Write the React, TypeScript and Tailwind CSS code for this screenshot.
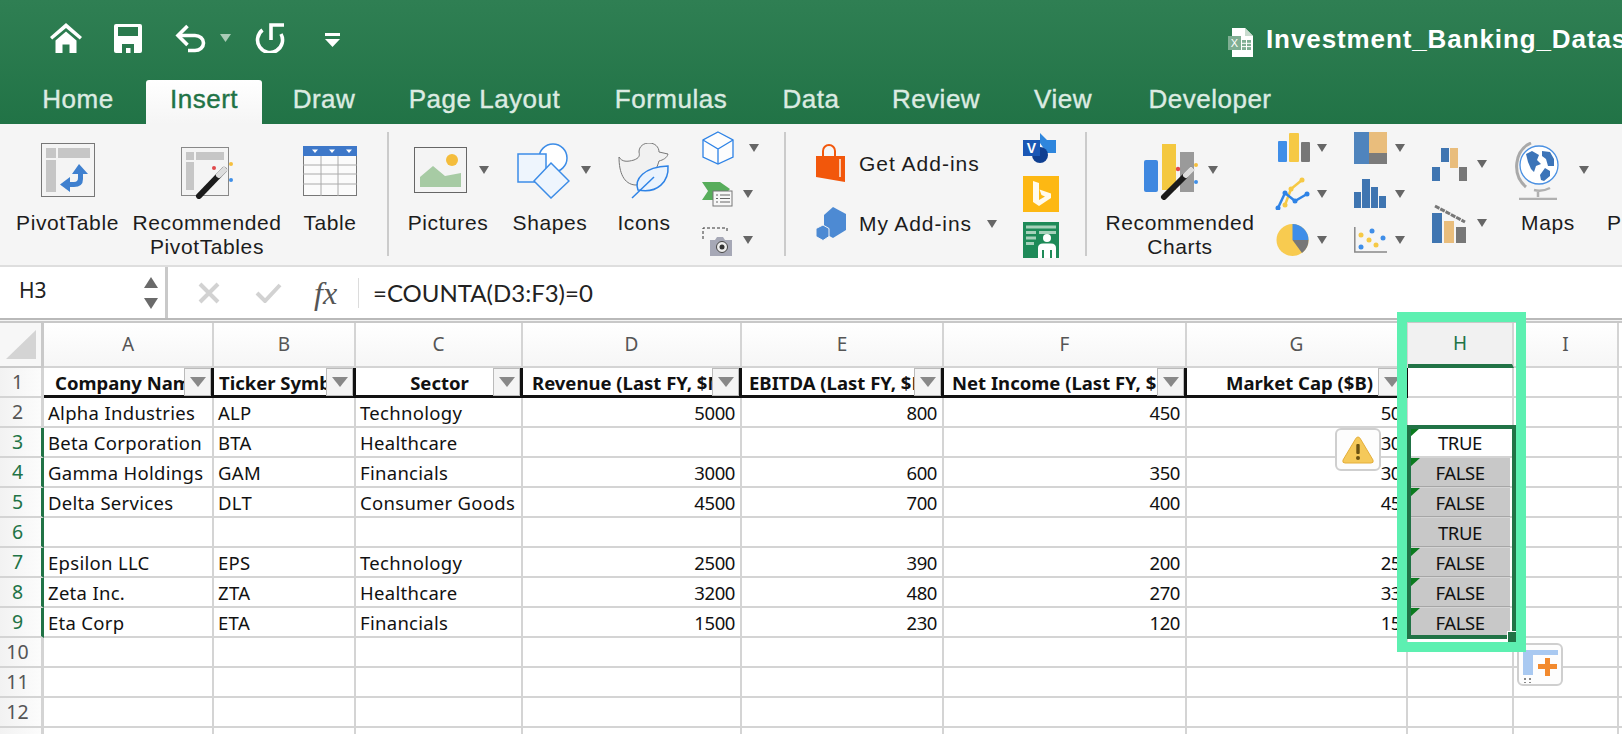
import React from "react";

const Caret = ({ className = "" }: { className?: string }) => (
  <svg width="10" height="8" viewBox="0 0 10 8" className={"flex-none " + className}><path d="M0 0H10L5 8Z" fill="#666" /></svg>
);

const Home = () => (
  <svg width="32" height="30" viewBox="0 0 32 30" fill="#fff" className="flex-none">
    <path d="M16 0 0 14l2.2 2.6L16 5l13.8 11.6L32 14Z" />
    <path d="M5.500 17.500 16 8.500l10.500 9V30H19.500v-8.500h-7V30H5.500Z" />
  </svg>
);
const Save = () => (
  <svg width="28" height="29" viewBox="0 0 28 29" className="flex-none">
    <path d="M2 0H26a2 2 0 0 1 2 2V27a2 2 0 0 1-2 2H2a2 2 0 0 1-2-2V2a2 2 0 0 1 2-2Z" fill="#fff" />
    <rect x="4" y="3" width="20" height="9" fill="#2a7a4e" />
    <path d="M8 29V20H20V29H16.500V24H12V29Z" fill="#2a7a4e" />
  </svg>
);
const Undo = () => (
  <svg width="31" height="29" viewBox="0 0 31 29" fill="none" stroke="#fff" strokeWidth="3.600" className="flex-none">
    <path d="M12.500 2 3 11.500 12.500 21" />
    <path d="M3 11.500H20a8.500 7.500 0 0 1 0 15H13" />
  </svg>
);
const Redo = () => (
  <svg width="30" height="30" viewBox="0 0 30 30" fill="none" stroke="#fff" strokeWidth="3.600" className="flex-none">
    <path d="M7.500 7A12.500 12.500 0 1 0 26 11" />
    <path d="M29 2H16V17" />
  </svg>
);
const Customize = () => (
  <svg width="15" height="14" viewBox="0 0 15 14" fill="#fff" className="flex-none mt-[4px]">
    <rect width="15" height="3" /><path d="M0 6H15L7.500 14Z" />
  </svg>
);
const XlDoc = () => (
  <svg width="25" height="29" viewBox="0 0 25 29" className="flex-none">
    <path d="M4 0H17L25 8V29H4Z" fill="#fff" />
    <path d="M17 0 25 8H17Z" fill="#c9dccf" />
    <rect x="14" y="12" width="9" height="10" fill="#7fae93" />
    <path d="M14 15.300H23M14 18.600H23M18.500 12V22" stroke="#fff" strokeWidth="1" />
    <rect x="0" y="8" width="13" height="14" fill="#7fae93" />
    <text x="6.500" y="19" fontSize="11" fill="#fff" textAnchor="middle" fontFamily="Liberation Sans">X</text>
  </svg>
);

const Pivot = () => (
  <svg width="54" height="54" viewBox="0 0 54 54" className="flex-none">
    <rect x=".5" y=".5" width="53" height="53" fill="#f4f4f4" stroke="#777" />
    <rect x="5" y="5" width="10" height="10" fill="#c6c6c6" /><rect x="17" y="5" width="32" height="10" fill="#c6c6c6" />
    <rect x="5" y="17" width="10" height="32" fill="#c6c6c6" />
    <path d="M38 21 47 31H42V36Q42 44 33 44H29V49L19 41.500 29 34V39H33Q37 39 37 35V31H31Z" fill="#3f80cf" />
  </svg>
);
const RecPivot = () => (
  <svg width="56" height="52" viewBox="0 0 56 52" className="flex-none">
    <rect x=".5" y=".5" width="47" height="48" fill="#f4f4f4" stroke="#888" />
    <rect x="5" y="5" width="8" height="8" fill="#c6c6c6" /><rect x="15" y="5" width="28" height="8" fill="#c6c6c6" />
    <rect x="5" y="15" width="8" height="28" fill="#c6c6c6" />
    <path d="M18 49 43 23" stroke="#1b1b1b" strokeWidth="6" strokeLinecap="round" />
    <path d="M38 28 43 23" stroke="#ddd" strokeWidth="6" strokeLinecap="round" />
    <circle cx="33" cy="21" r="2" fill="#e0494b" /><circle cx="50" cy="17" r="2" fill="#f5bf3e" /><circle cx="50" cy="33" r="2" fill="#3f8fe8" />
  </svg>
);
const TableIcon = () => (
  <svg width="54" height="50" viewBox="0 0 54 50" className="flex-none">
    <rect x=".5" y=".5" width="53" height="49" fill="#fbfbfb" stroke="#777" />
    <rect width="54" height="10" fill="#3e78c9" />
    <path d="M9 3.500H15L12 7ZM26 3.500H32L29 7ZM43 3.500H49L46 7Z" fill="#fff" />
    <path d="M0 19H54M0 28H54M0 38H54M18 10V50M35 10V50" stroke="#aaa" fill="none" />
  </svg>
);
const Picture = () => (
  <svg width="53" height="46" viewBox="0 0 53 46" className="flex-none">
    <rect x=".5" y=".5" width="52" height="45" fill="#f4f4f4" stroke="#666" />
    <circle cx="38" cy="13" r="6" fill="#f4bd3c" />
    <path d="M6 40V30L19 19 31 29 47 26V40Z" fill="#a7cba4" />
  </svg>
);
const Shapes = () => (
  <svg width="53" height="56" viewBox="0 0 53 56" className="flex-none">
    <circle cx="36" cy="15" r="14" fill="#fff" stroke="#3c8ce7" strokeWidth="1.500" />
    <rect x="1" y="11" width="28" height="28" fill="#eef5fd" stroke="#3c8ce7" strokeWidth="1.500" />
    <path d="M34 20 52 38 34 55 17 38Z" fill="#eef5fd" stroke="#3c8ce7" strokeWidth="1.500" />
  </svg>
);
const Duck = () => (
  <svg width="53" height="56" viewBox="0 0 53 56" className="flex-none">
    <path d="M1 14C4 19 9 19 16 17 21 15 22 13 21 9 21 3 26 0 31 0 37 0 41 4 41 9L50 11C49 15 45 17 41 18 38 28 32 42 17 42 6 41 1 30 1 14Z" fill="#f1f1f1" stroke="#777" strokeWidth="1" />
    <path d="M50 23C51 38 40 51 20 47 16 36 26 24 50 23Z" fill="#eaf3fd" stroke="#2e83e6" strokeWidth="1.500" />
    <path d="M14 55 36 34" stroke="#2e83e6" strokeWidth="1.500" fill="none" />
  </svg>
);
const Cube = () => (
  <svg width="32" height="34" viewBox="0 0 32 34" fill="#fdfdfd" stroke="#2e83e6" strokeWidth="1.300" className="flex-none">
    <path d="M16 1 31 9V26L16 33 1 26V9Z" /><path d="M1 9 16 18 31 9M16 18V33" fill="none" />
  </svg>
);
const Smart = () => (
  <svg width="31" height="25" viewBox="0 0 31 25" className="flex-none">
    <path d="M0 0H18L28 7 18 18H0L6 9Z" fill="#57ad5b" />
    <rect x="11" y="9" width="19" height="15" fill="#f7f7f7" stroke="#777" />
    <path d="M14 13h2M18 13h10M14 16.500h2M18 16.500h10M14 20h2M18 20h10" stroke="#666" />
  </svg>
);
const Shot = () => (
  <svg width="31" height="30" viewBox="0 0 31 30" className="flex-none">
    <path d="M1 12V1H25V6" stroke="#333" strokeDasharray="3 2" fill="none" />
    <path d="M8 13H13L15 10H21L23 13H30V29H8Z" fill="#a6a8b6" />
    <circle cx="20" cy="20" r="5.500" fill="#eee" stroke="#444" /><circle cx="20" cy="20" r="2.500" fill="#333" />
  </svg>
);
const Bag = () => (
  <svg width="30" height="38" viewBox="0 0 30 38" className="flex-none">
    <path d="M8 12V7a6 6 0 0 1 12 0V12" fill="none" stroke="#f2570b" strokeWidth="2" />
    <path d="M1 12H30V38L1 33Z" fill="#f2570b" />
    <path d="M25 15V33" stroke="#f7c7ad" strokeWidth="2" />
  </svg>
);
const Hexes = () => (
  <svg width="31" height="34" viewBox="0 0 31 34" className="flex-none">
    <path d="M18 0 31 7V23L18 31 9 26V8Z" fill="#4d8ad3" />
    <path d="M8 18 14 21.500V29.500L8 33.500 1 29.500V21.500Z" fill="#4d8ad3" stroke="#f5f5f5" />
  </svg>
);
const Visio = () => (
  <svg width="33" height="30" viewBox="0 0 33 30" className="flex-none">
    <path d="M17 0 24 7H33V20H24L17 10Z" fill="#2e86dd" />
    <circle cx="17" cy="22" r="8" fill="#0f3f91" />
    <rect x="0" y="7" width="17" height="16" fill="#1a57b5" />
    <text x="8.500" y="20" fontSize="14" fontWeight="700" fill="#fff" textAnchor="middle" fontFamily="Liberation Sans">V</text>
  </svg>
);
const Bing = () => (
  <svg width="36" height="36" viewBox="0 0 36 36" className="flex-none">
    <rect width="36" height="36" fill="#fdb813" />
    <path d="M10 5 16 7V24L22 20.500 18.500 19 16.500 13.500 28 17.500V22L16 30 10 26Z" fill="#fff" fillOpacity=".92" />
  </svg>
);
const PeopleApp = () => (
  <svg width="36" height="36" viewBox="0 0 36 36" className="flex-none">
    <rect width="36" height="36" fill="#1e8a58" />
    <path d="M3 3.500H33V6.500H3ZM3 9H13V12H3ZM16 9H33V12H16ZM3 14.500H13V17.500H3ZM3 20H11V23H3Z" fill="#a6d1ba" />
    <circle cx="24" cy="16" r="4" fill="#fff" />
    <path d="M15 36V26Q15 21.500 20 21.500H28Q33 21.500 33 26V36H29V28H27V36H21V28H19V36Z" fill="#fff" />
  </svg>
);
const RecCharts = () => (
  <svg width="55" height="56" viewBox="0 0 55 56" className="flex-none">
    <rect x="0" y="16" width="14" height="32" rx="2" fill="#3f88e0" />
    <rect x="18" y="0" width="14" height="46" fill="#f4c83f" />
    <rect x="36" y="8" width="14" height="40" fill="#9a9a9a" />
    <path d="M20 53 47 26" stroke="#1b1b1b" strokeWidth="6" strokeLinecap="round" />
    <path d="M42 31 47 26" stroke="#ddd" strokeWidth="6" strokeLinecap="round" />
    <circle cx="34" cy="25" r="2.200" fill="#e0494b" /><circle cx="52" cy="21" r="2" fill="#f5bf3e" /><circle cx="52" cy="38" r="2" fill="#3f8fe8" />
  </svg>
);
const ColChart = () => (
  <svg width="32" height="29" viewBox="0 0 32 29" className="flex-none">
    <rect y="8" width="9" height="21" rx="1" fill="#3f8ee8" /><rect x="11" width="10" height="29" rx="1" fill="#f6c945" /><rect x="23" y="9" width="9" height="20" rx="1" fill="#777" />
  </svg>
);
const LineChart = () => (
  <svg width="36" height="33" viewBox="0 0 36 33" fill="none" className="flex-none">
    <path d="M10 28 16 12 27 3" stroke="#f6c945" strokeWidth="2.500" />
    <path d="M3 31 10 16 20 24 32 17" stroke="#2e83e6" strokeWidth="2.500" />
    <circle cx="27" cy="3" r="2.500" fill="#f6c945" /><circle cx="16" cy="12" r="2.500" fill="#f6c945" /><circle cx="10" cy="28" r="2.500" fill="#f6c945" />
    <circle cx="3" cy="31" r="2.500" fill="#2e83e6" /><circle cx="10" cy="16" r="2.500" fill="#2e83e6" /><circle cx="20" cy="24" r="2.500" fill="#2e83e6" /><circle cx="32" cy="17" r="2.500" fill="#2e83e6" />
  </svg>
);
const Pie = () => (
  <svg width="33" height="32" viewBox="0 0 33 32" className="flex-none">
    <circle cx="16.500" cy="16" r="16" fill="#f8cb50" />
    <path d="M16.500 16V0A16 16 0 0 1 32.500 16Z" fill="#3f8ee8" />
    <path d="M16.500 16H32.500A16 16 0 0 1 26 29Z" fill="#777" />
  </svg>
);
const Treemap = () => (
  <svg width="33" height="32" viewBox="0 0 33 32" className="flex-none">
    <rect width="15" height="32" fill="#4f84bd" /><rect x="15" width="18" height="21" fill="#e9bd7c" /><rect x="15" y="21" width="18" height="11" fill="#7b7b7b" />
  </svg>
);
const Hist = () => (
  <svg width="32" height="29" viewBox="0 0 32 29" fill="#3f75b1" className="flex-none">
    <rect y="13" width="7" height="16" /><rect x="8" width="8" height="29" /><rect x="17" y="8" width="7" height="21" /><rect x="25" y="17" width="7" height="12" />
  </svg>
);
const Scatter = () => (
  <svg width="33" height="26" viewBox="0 0 33 26" className="flex-none">
    <path d="M.8 0V25H33" stroke="#888" strokeWidth="1.500" fill="none" />
    <circle cx="7" cy="8" r="2.500" fill="#f6c945" /><circle cx="18" cy="4" r="2.500" fill="#3f8ee8" /><circle cx="15" cy="13" r="2.500" fill="#f6c945" />
    <circle cx="7" cy="20" r="2.500" fill="#3f8ee8" /><circle cx="22" cy="18" r="2.500" fill="#f6c945" /><circle cx="29" cy="11" r="2.500" fill="#3f8ee8" />
  </svg>
);
const Waterfall = () => (
  <svg width="35" height="33" viewBox="0 0 35 33" className="flex-none">
    <rect y="19" width="8" height="14" fill="#3f75b1" /><rect x="9" width="8" height="14" fill="#3f75b1" /><rect x="18" width="8" height="20" fill="#e9bd7c" /><rect x="27" y="19" width="8" height="14" fill="#777" />
  </svg>
);
const Combo = () => (
  <svg width="35" height="39" viewBox="0 0 35 39" className="flex-none">
    <rect y="9" width="10" height="30" fill="#3f75b1" /><rect x="12" y="17" width="10" height="22" fill="#e9bd7c" /><rect x="24" y="23" width="10" height="16" fill="#777" />
    <path d="M3 2 33 18" stroke="#777" strokeWidth="3" strokeDasharray="5 1" fill="none" />
  </svg>
);
const Globe = () => (
  <svg width="48" height="58" viewBox="0 0 48 58" className="flex-none">
    <path d="M17 1C1 8-3 32 12 45" fill="none" stroke="#a9a9a9" strokeWidth="3" />
    <path d="M36 46Q28 50 20 48M24 48V55M5 57H43" fill="none" stroke="#b0b0b0" strokeWidth="2.500" />
    <circle cx="25" cy="23" r="19" fill="#fff" stroke="#4a90e2" strokeWidth="1.300" />
    <path d="M12 12 18 9 25 13 23 18 27 22 22 24 20 30 17 27 14 20ZM26 33 31 26 36 29 36 34 30 39 27 38ZM28 9 36 10 40 17 40 24 34 24 32 17 28 14Z" fill="#3c74b8" />
  </svg>
);

const Big = ({ label, w, children, slot = "justify-center" }: { label: React.ReactNode; w: string; children: React.ReactNode; slot?: string }) => (
  <div className={"flex flex-none flex-col items-center pt-[19px] " + w}>
    <div className={"flex h-[68px] w-full items-start " + slot}>{children}</div>
    <div className="whitespace-nowrap text-center text-[21px] leading-[24px] tracking-[0.6px] text-[#1c1c1c]">{label}</div>
  </div>
);
const Sep = () => <div className="mt-[8px] h-[124px] w-[2px] flex-none bg-[#cbcbcb]" />;

const tabs: [string, string][] = [
  ["Home", "ml-[20px] w-[116px]"], ["Insert", "ml-[10px] w-[116px]"], ["Draw", "w-[124px]"], ["Page Layout", "w-[197px]"],
  ["Formulas", "w-[176px]"], ["Data", "w-[104px]"], ["Review", "w-[146px]"], ["View", "w-[108px]"], ["Developer", "w-[186px]"],
];

const rows: (string | number)[][] = [
  ["Alpha Industries", "ALP", "Technology", 5000, 800, 450, 50],
  ["Beta Corporation", "BTA", "Healthcare", "", "", "", 30],
  ["Gamma Holdings", "GAM", "Financials", 3000, 600, 350, 30],
  ["Delta Services", "DLT", "Consumer Goods", 4500, 700, 400, 45],
  ["", "", "", "", "", "", ""],
  ["Epsilon LLC", "EPS", "Technology", 2500, 390, 200, 25],
  ["Zeta Inc.", "ZTA", "Healthcare", 3200, 480, 270, 33],
  ["Eta Corp", "ETA", "Financials", 1500, 230, 120, 15],
];
const hVals = ["TRUE", "FALSE", "FALSE", "TRUE", "FALSE", "FALSE", "FALSE"];

const heads: [string, string][] = [
  ["Company Name", "pl-[11px]"], ["Ticker Symbol", "pl-[5px]"], ["Sector", "text-center pl-[30px]"], ["Revenue (Last FY, $M)", "pl-[9px]"],
  ["EBITDA (Last FY, $M)", "pl-[7px]"], ["Net Income (Last FY, $M)", "pl-[8px]"], ["Market Cap ($B)", "text-right pr-[5px]"],
];

const cellB = "border-r-2 border-b-2 border-[#d4d4d4]";
const RowHead = ({ n, on }: { n: number; on?: boolean }) => (
  <div className={"flex h-[30px] items-center justify-center border-r-[3px] border-b-2 border-[#d4d4d4] bg-gradient-to-r from-[#f2f2f2] to-[#fcfcfc] pr-[6px] text-[19.500px] " + (on ? "border-r-[#217346] text-[#217346]" : "text-[#555]")}>{n}</div>
);

export default function App() {
  return (
    <div className="relative h-[734px] w-[1622px] overflow-hidden bg-white font-['Liberation_Sans',sans-serif]">
      <div className="bg-gradient-to-b from-[#2f7f53] to-[#217346]">
        <div className="flex h-[80px] items-start overflow-hidden">
          <div className="flex h-[30px] items-center pl-[50px] mt-[23px]">
            <Home /><div className="ml-[32px]"><Save /></div><div className="ml-[33px]"><Undo /></div>
            <svg width="11" height="8" viewBox="0 0 11 8" className="ml-[14px]"><path d="M0 0H11L5.500 8Z" fill="#a9cbb6" /></svg>
            <div className="ml-[24px]"><Redo /></div><div className="ml-[40px]"><Customize /></div>
          </div>
          <div className="ml-auto mt-[23px] flex w-[394px] items-center overflow-hidden">
            <XlDoc />
            <span className="ml-[13px] -translate-y-[3px] whitespace-nowrap text-[26px] font-bold tracking-[0.9px] text-white">Investment_Banking_Dataset.xlsx</span>
          </div>
        </div>
        <div className="flex h-[44px]">
          {tabs.map(([t, c]) => (
            <div key={t} className={"flex flex-none items-center justify-center pb-[5px] text-[26px] tracking-[0.5px] [-webkit-text-stroke:0.4px_currentColor] " + c + (t === "Insert" ? " rounded-t-[3px] bg-gradient-to-b from-white to-[#f5f5f5] text-[#217346]" : " text-[#dcebe2]")}>{t}</div>
          ))}
        </div>
      </div>

      <div className="flex h-[141px] overflow-hidden bg-[#f5f5f5]">
        <Big w="w-[133px] pl-[2px]" label="PivotTable" slot="justify-start pl-[39px]"><Pivot /></Big>
        <Big w="w-[148px]" label={<>Recommended<br />PivotTables</>} slot="justify-start pl-[48px] pt-[4px]"><RecPivot /></Big>
        <Big w="w-[98px]" label="Table" slot="justify-center pt-[3px]"><TableIcon /></Big>
        <div className="ml-[8px] flex-none"><Sep /></div>
        <Big w="w-[118px]" label="Pictures" slot="justify-start pl-[25px] pt-[4px]"><Picture /><Caret className="ml-[12px] mt-[19px]" /></Big>
        <Big w="w-[86px]" label="Shapes" slot="justify-start pl-[10px]"><Shapes /><Caret className="ml-[11px] mt-[23px]" /></Big>
        <Big w="w-[102px]" label="Icons" slot="justify-start pl-[25px]"><Duck /></Big>
        <div className="flex w-[89px] flex-none flex-col pl-[7px] pt-[7px]">
          <div className="flex h-[51px] items-start"><Cube /><Caret className="ml-[15px] mt-[13px]" /></div>
          <div className="flex h-[45px] items-start"><Smart /><Caret className="ml-[10px] mt-[8px]" /></div>
          <div className="flex items-start"><Shot /><Caret className="ml-[10px] mt-[9px]" /></div>
        </div>
        <Sep />
        <div className="flex w-[218px] flex-none flex-col pl-[29px] pt-[20px]">
          <div className="flex h-[63px] items-start">
            <Bag /><span className="ml-[14px] text-[21px] leading-[40px] tracking-[1px] text-[#1c1c1c]">Get Add-ins</span>
          </div>
          <div className="flex items-center">
            <Hexes /><span className="ml-[13px] text-[21px] tracking-[0.9px] text-[#1c1c1c]">My Add-ins</span><Caret className="ml-[15px]" />
          </div>
        </div>
        <div className="flex w-[81px] flex-none flex-col pl-[19px] pt-[9px]">
          <Visio /><div className="mt-[13px]"><Bing /></div><div className="mt-[10px]"><PeopleApp /></div>
        </div>
        <Sep />
        <Big w="w-[182px] pl-[4px]" label={<>Recommended<br />Charts</>} slot="justify-start pl-[53px] pt-[1px]"><RecCharts /><Caret className="ml-[9px] mt-[22px]" /></Big>
        <div className="flex w-[76px] flex-none flex-col pt-[9px]">
          <div className="flex h-[44px] items-start"><div className="w-[48px] pl-[9px]"><ColChart /></div><Caret className="mt-[11px]" /></div>
          <div className="flex h-[47px] items-start"><div className="w-[48px] pl-[6px]"><LineChart /></div><Caret className="mt-[13px]" /></div>
          <div className="flex items-start"><div className="w-[48px] pl-[7px]"><Pie /></div><Caret className="mt-[12px]" /></div>
        </div>
        <div className="flex w-[78px] flex-none flex-col pt-[8px]">
          <div className="flex h-[47px] items-start"><div className="w-[50px] pl-[9px]"><Treemap /></div><Caret className="mt-[12px]" /></div>
          <div className="flex h-[48px] items-start"><div className="w-[50px] pl-[9px]"><Hist /></div><Caret className="mt-[11px]" /></div>
          <div className="flex items-start"><div className="w-[50px] pl-[9px]"><Scatter /></div><Caret className="mt-[9px]" /></div>
        </div>
        <div className="flex w-[73px] flex-none flex-col pt-[24px]">
          <div className="flex h-[56px] items-start"><div className="w-[54px] pl-[9px]"><Waterfall /></div><Caret className="mt-[12px]" /></div>
          <div className="flex items-start"><div className="w-[54px] pl-[9px]"><Combo /></div><Caret className="mt-[15px]" /></div>
        </div>
        <div className="flex w-[104px] flex-none flex-col items-center pt-[18px]">
          <div className="flex h-[69px] w-full items-start pl-[18px]"><Globe /><Caret className="ml-[17px] mt-[24px]" /></div>
          <div className="text-[21px] leading-[24px] tracking-[0.6px] text-[#1c1c1c]">Maps</div>
        </div>
        <div className="flex-none pl-[7px] pt-[87px] text-[21px] leading-[24px] text-[#1c1c1c]">P</div>
      </div>

      <div className="flex h-[53px] items-stretch border-t-2 border-[#dedede] bg-white font-['Noto_Sans',sans-serif]">
        <div className="flex w-[168px] flex-none items-center justify-between border-r-[3px] border-[#c9c9c9] pl-[19px] pr-[7px]">
          <span className="-translate-y-[2px] text-[21px] text-[#222]">H3</span>
          <div className="flex flex-col gap-[10px]">
            <svg width="14" height="11" viewBox="0 0 14 11"><path d="M7 0 14 11H0Z" fill="#6a6a6a" /></svg>
            <svg width="14" height="11" viewBox="0 0 14 11"><path d="M0 0H14L7 11Z" fill="#6a6a6a" /></svg>
          </div>
        </div>
        <div className="ml-[30px] flex items-center">
          <svg width="22" height="22" viewBox="0 0 22 22"><path d="M2 2 20 20M20 2 2 20" stroke="#d2d2d2" strokeWidth="4" /></svg>
          <svg width="27" height="20" viewBox="0 0 27 20" className="ml-[35px]"><path d="M2 10 10 18 25 2" stroke="#d2d2d2" strokeWidth="4" fill="none" /></svg>
          <span className="ml-[32px] w-[44px] font-['Liberation_Serif',serif] text-[32px] italic leading-none text-[#555]">fx</span>
          <div className="h-[30px] w-px bg-[#dcdcdc]" />
          <span className="ml-[14px] font-['Lato',sans-serif] text-[24px] text-[#222]">=COUNTA(D3:F3)=0</span>
        </div>
      </div>
      <div className="h-[5px] border-t-2 border-b-2 border-t-[#b9b9b9] border-b-[#c8c8c8] bg-[#f4f4f4]" />

      <div className="grid grid-cols-[44px_170px_142px_167px_219px_202px_243px_221px_106px_105px_1fr] font-['Noto_Sans',sans-serif] text-[18.500px] text-[#111]">
        <div className="flex h-[45px] items-center justify-center border-r-[3px] border-b-2 border-[#c9c9c9] bg-[#f7f7f7]">
          <svg width="30" height="29" viewBox="0 0 30 29"><path d="M30 0V29H0Z" fill="#d4d4d4" /></svg>
        </div>
        {["A", "B", "C", "D", "E", "F", "G"].map((c) => (
          <div key={c} className="flex h-[45px] items-center justify-center border-r-2 border-b-2 border-[#d4d4d4] bg-gradient-to-b from-white to-[#f6f6f6] text-[19px] text-[#555]">{c}</div>
        ))}
        <div className="flex h-[45px] items-center justify-center border-r-2 border-b-[4px] border-r-[#d4d4d4] border-b-[#217346] bg-[#f1f1f1] text-[19px] text-[#217346]">H</div>
        <div className="flex h-[45px] items-center justify-center border-r-2 border-b-2 border-[#d4d4d4] bg-gradient-to-b from-white to-[#f6f6f6] text-[19px] text-[#555]">I</div>
        <div className="h-[45px] border-b-2 border-[#d4d4d4]" />

        <RowHead n={1} />
        {heads.map(([h, c]) => (
          <div key={h} className="flex h-[30px] items-stretch border-r-[3px] border-b-[3px] border-[#111] font-bold">
            <span className={"min-w-0 flex-1 overflow-hidden whitespace-nowrap leading-[30px] tracking-[0px] " + c}>{h}</span>
            <div className="flex h-[28px] w-[27px] flex-none items-center justify-center border border-[#bbb] bg-[#f4f4f4]">
              <svg width="16" height="10" viewBox="0 0 16 10"><path d="M0 0H16L8 10Z" fill="#888" /></svg>
            </div>
          </div>
        ))}
        <div className={"h-[30px] " + cellB} /><div className={"h-[30px] " + cellB} /><div className="h-[30px] border-b-2 border-[#d4d4d4]" />

        {Array.from({ length: 12 }, (_, i) => {
          const n = i + 2;
          const r = rows[i] ?? ["", "", "", "", "", "", ""];
          const inSel = n >= 3 && n <= 9;
          const v = inSel ? hVals[n - 3] : "";
          return (
            <React.Fragment key={n}>
              <RowHead n={n} on={inSel} />
              {r.map((x, j) => (
                <div key={j} className={"h-[30px] overflow-hidden whitespace-nowrap leading-[29px] " + cellB + (j >= 3 ? " pr-[5px] text-right tracking-[-0.4px]" : " pl-[4px] tracking-[0.3px]")}>{x}</div>
              ))}
              <div className={"relative h-[30px] " + cellB}>
                {inSel && (
                  <div className={"ml-[2px] mr-[2px] h-full pt-[1px] text-center leading-[27px] tracking-[-0.4px] " + (n === 3 ? "" : "bg-[#c8c8c8] shadow-[0_1px_0_#a6a6a6]")}>{v}</div>
                )}
                {inSel && n !== 6 && (
                  <svg width="10" height="9" viewBox="0 0 10 9" className="absolute left-[2px] top-0"><path d="M0 0H10L0 9Z" fill="#0a7a1e" /></svg>
                )}
              </div>
              <div className={"h-[30px] " + cellB} />
              <div className="h-[30px] border-b-2 border-[#d4d4d4]" />
            </React.Fragment>
          );
        })}
      </div>

      <div className="absolute left-[1335px] top-[428px] flex h-[43px] w-[46px] items-center justify-center rounded-[6px] border-2 border-[#cfcfcf] bg-[#fdfdfd]">
        <svg width="32" height="28" viewBox="0 0 32 28">
          <path d="M16 1Q17.500 1 18.500 3L31 24Q32 27 29 27H3Q0 27 1 24L13.500 3Q14.500 1 16 1Z" fill="#f5c95a" stroke="#e4ae3a" />
          <rect x="14.300" y="8" width="3.400" height="10" rx="1" fill="#6b5212" /><circle cx="16" cy="22" r="2" fill="#6b5212" />
        </svg>
      </div>
      <div className="absolute left-[1517px] top-[643px] flex h-[43px] w-[46px] items-center justify-center rounded-[6px] border-2 border-[#cfcfcf] bg-[#fdfdfd]">
        <svg width="38" height="36" viewBox="0 0 38 36">
          <path d="M2 3H37V8H12V28H2Z" fill="#a9c9f1" />
          <path d="M24 11H29V17H36V22H29V29H24V22H17V17H24Z" fill="#f28a2e" />
          <path d="M3 31h2v2H3zM8 31h2v2H8zM3 35h2v1H3zM8 35h2v1H8z" fill="#888" />
        </svg>
      </div>

      <div className="absolute left-[1407px] top-[425px] h-[214px] w-[109px] border-[4px] border-[#217346]" />
      <div className="absolute left-[1507px] top-[631px] h-[12px] w-[10px] border border-white bg-[#217346]" />
      <div className="absolute left-[1397px] top-[312px] h-[340px] w-[129px] border-[10px] border-[#5df0b1]" />
    </div>
  );
}
